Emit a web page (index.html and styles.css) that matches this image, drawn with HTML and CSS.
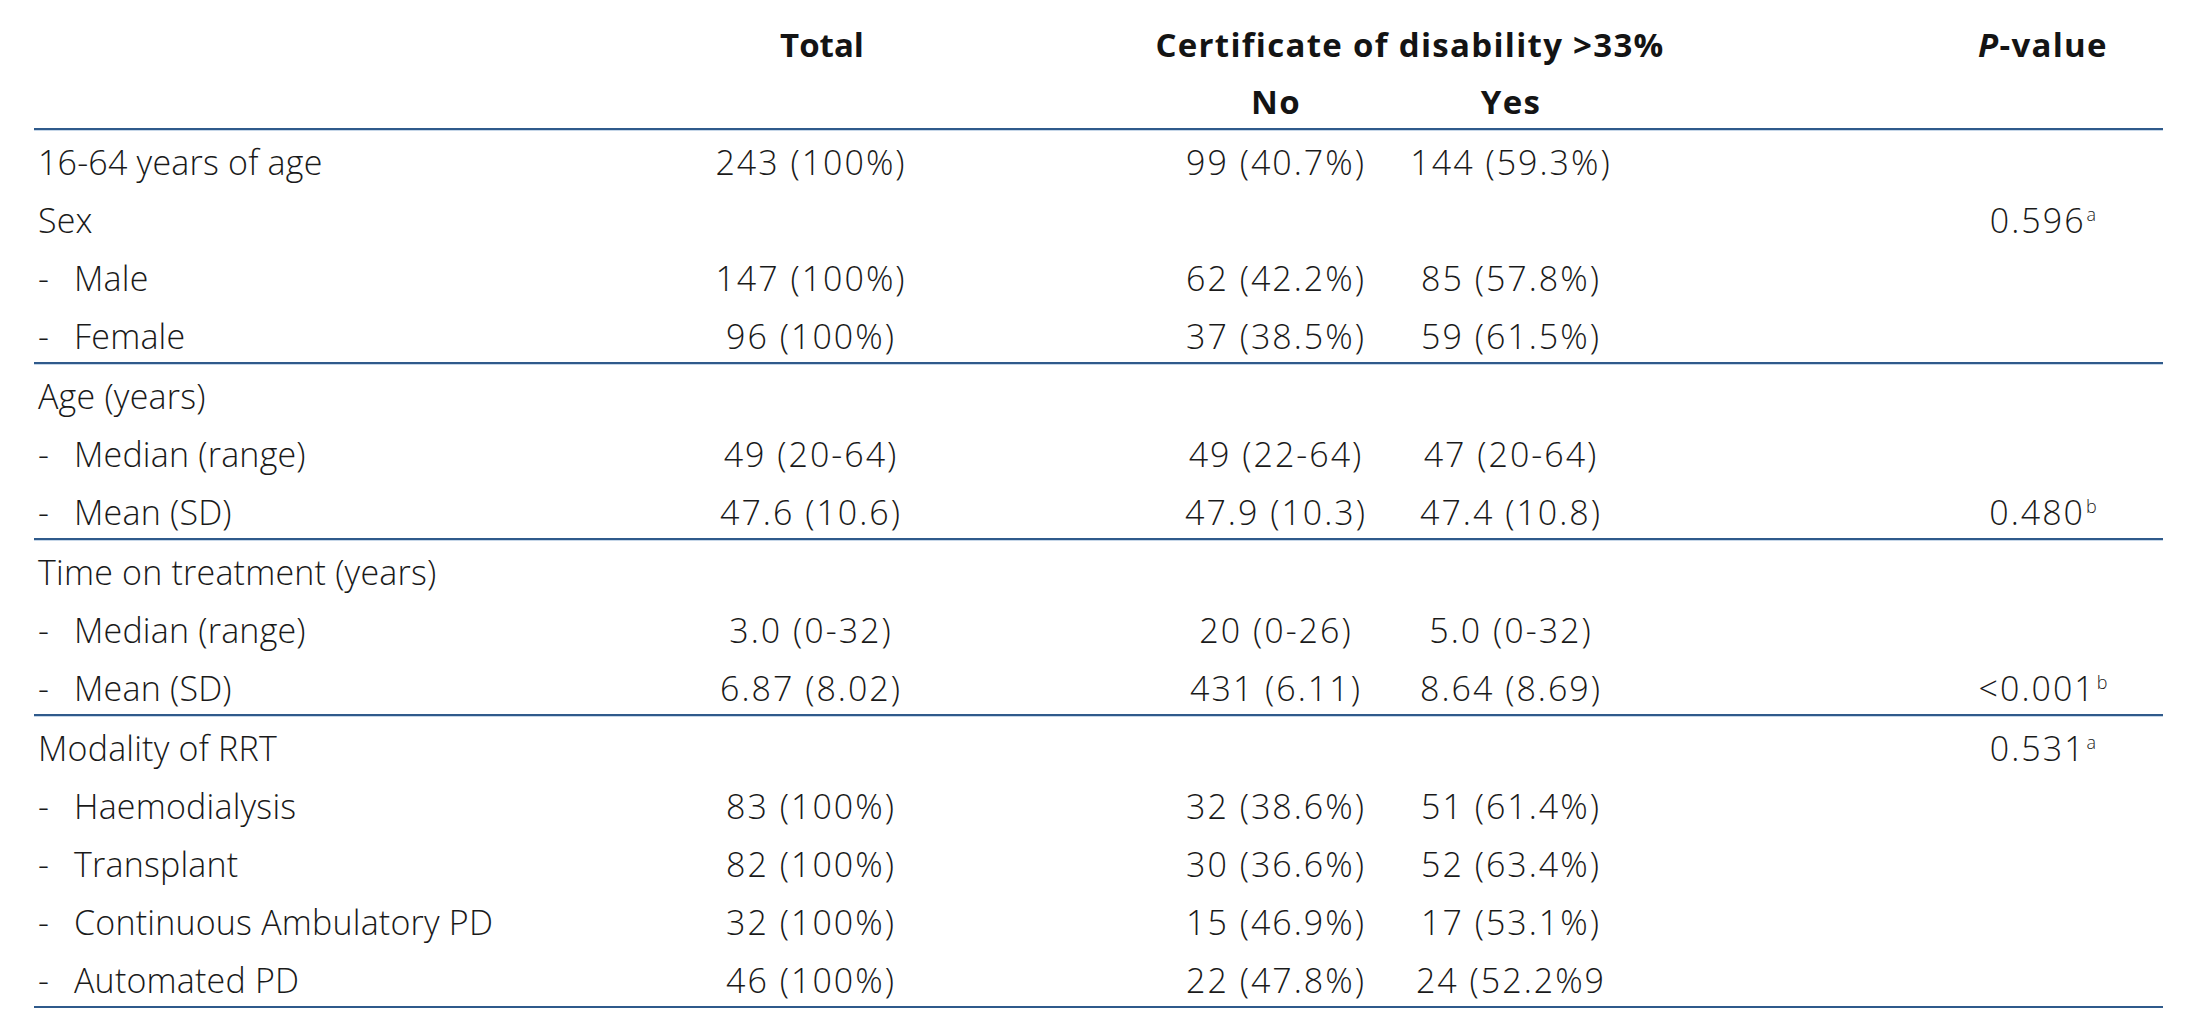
FILE: index.html
```html
<!DOCTYPE html>
<html lang="en">
<head>
<meta charset="utf-8">
<title>Certificate of disability table</title>
<link rel="stylesheet" href="styles.css">
</head>
<body>
<div class="table">
  <div class="head">
    <div class="row hrow1">
      <div class="hc c-total h-total">Total</div>
      <div class="hc c-cert">Certificate of disability &gt;33%</div>
      <div class="hc c-p"><i>P</i>-value</div>
    </div>
    <div class="row hrow2">
      <div class="hc c-no">No</div>
      <div class="hc c-yes">Yes</div>
    </div>
  </div>

  <div class="group">
    <div class="row">
      <div class="lbl">16-64 years of age</div>
      <div class="num c-total">243 (100%)</div>
      <div class="num c-no">99 (40.7%)</div>
      <div class="num c-yes">144 (59.3%)</div>
    </div>
    <div class="row">
      <div class="lbl">Sex</div>
      <div class="num c-p">0.596<sup>a</sup></div>
    </div>
    <div class="row">
      <div class="lbl"><span class="dash">-</span>Male</div>
      <div class="num c-total">147 (100%)</div>
      <div class="num c-no">62 (42.2%)</div>
      <div class="num c-yes">85 (57.8%)</div>
    </div>
    <div class="row">
      <div class="lbl"><span class="dash">-</span>Female</div>
      <div class="num c-total">96 (100%)</div>
      <div class="num c-no">37 (38.5%)</div>
      <div class="num c-yes">59 (61.5%)</div>
    </div>
  </div>

  <div class="group">
    <div class="row">
      <div class="lbl">Age (years)</div>
    </div>
    <div class="row">
      <div class="lbl"><span class="dash">-</span>Median (range)</div>
      <div class="num c-total">49 (20-64)</div>
      <div class="num c-no">49 (22-64)</div>
      <div class="num c-yes">47 (20-64)</div>
    </div>
    <div class="row">
      <div class="lbl"><span class="dash">-</span>Mean (SD)</div>
      <div class="num c-total">47.6 (10.6)</div>
      <div class="num c-no">47.9 (10.3)</div>
      <div class="num c-yes">47.4 (10.8)</div>
      <div class="num c-p">0.480<sup>b</sup></div>
    </div>
  </div>

  <div class="group">
    <div class="row">
      <div class="lbl">Time on treatment (years)</div>
    </div>
    <div class="row">
      <div class="lbl"><span class="dash">-</span>Median (range)</div>
      <div class="num c-total">3.0 (0-32)</div>
      <div class="num c-no">20 (0-26)</div>
      <div class="num c-yes">5.0 (0-32)</div>
    </div>
    <div class="row">
      <div class="lbl"><span class="dash">-</span>Mean (SD)</div>
      <div class="num c-total">6.87 (8.02)</div>
      <div class="num c-no">431 (6.11)</div>
      <div class="num c-yes">8.64 (8.69)</div>
      <div class="num c-p">&lt;0.001<sup>b</sup></div>
    </div>
  </div>

  <div class="group last">
    <div class="row">
      <div class="lbl">Modality of RRT</div>
      <div class="num c-p">0.531<sup>a</sup></div>
    </div>
    <div class="row">
      <div class="lbl"><span class="dash">-</span>Haemodialysis</div>
      <div class="num c-total">83 (100%)</div>
      <div class="num c-no">32 (38.6%)</div>
      <div class="num c-yes">51 (61.4%)</div>
    </div>
    <div class="row">
      <div class="lbl"><span class="dash">-</span>Transplant</div>
      <div class="num c-total">82 (100%)</div>
      <div class="num c-no">30 (36.6%)</div>
      <div class="num c-yes">52 (63.4%)</div>
    </div>
    <div class="row">
      <div class="lbl"><span class="dash">-</span>Continuous Ambulatory PD</div>
      <div class="num c-total">32 (100%)</div>
      <div class="num c-no">15 (46.9%)</div>
      <div class="num c-yes">17 (53.1%)</div>
    </div>
    <div class="row">
      <div class="lbl"><span class="dash">-</span>Automated PD</div>
      <div class="num c-total">46 (100%)</div>
      <div class="num c-no">22 (47.8%)</div>
      <div class="num c-yes">24 (52.2%9</div>
    </div>
  </div>
</div>
</body>
</html>
```

FILE: styles.css
```css
html, body {
  margin: 0;
  padding: 0;
  background: #ffffff;
}

body {
  font-family: "Open Sans", "Noto Sans", sans-serif;
  color: #1a1a1a;
}

.table {
  margin-left: 34px;
  width: 2129px;
}

.row {
  display: grid;
  grid-template-columns: 577px 400px 150px 230px 240px 292px 240px;
  height: 58px;
  box-sizing: border-box;
  padding-top: 6px;
  line-height: 52px;
  font-size: 34px;
  font-weight: 300;
  white-space: nowrap;
}

.lbl {
  grid-column: 1;
  padding-left: 4px;
  letter-spacing: 0.2px;
}

.dash {
  display: inline-block;
  width: 36px;
}

.num {
  text-align: center;
  letter-spacing: 2px;
}

.c-total { grid-column: 2; }
.c-no { grid-column: 4; }
.c-yes { grid-column: 5; }
.c-p { grid-column: 7; }
.c-cert { grid-column: 3 / 7; padding-right: 114px; }

sup {
  font-size: 18px;
  line-height: 0;
  vertical-align: 12px;
  letter-spacing: 0;
  margin-left: 1px;
}

.head {
  height: 128px;
}

.hc {
  font-size: 33px;
  font-weight: 700;
  color: #141414;
  text-align: center;
  letter-spacing: 1.3px;
}

.h-total {
  padding-left: 22px;
  letter-spacing: 0;
}

.hrow1 {
  height: 76px;
  padding-top: 14px;
  line-height: 62px;
}

.hrow2 {
  height: 52px;
  padding-top: 0;
  line-height: 52px;
}

.group {
  border-top: 2px solid #2f5a8b;
  box-shadow: inset 0 1px 0 #c5d6e8;
}

.group.last {
  border-bottom: 2px solid #2f5a8b;
}
```
